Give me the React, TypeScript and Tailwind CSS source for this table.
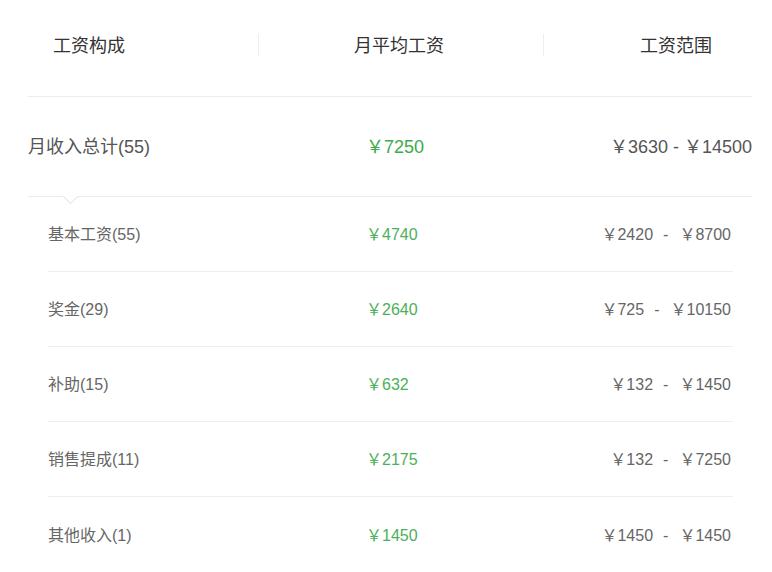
import React from 'react';

type SubRow = { name: string; avg: string; min: string; max: string };

const subRows: SubRow[] = [
    { name: '基本工资(55)', avg: '4740', min: '2420', max: '8700' },
    { name: '奖金(29)', avg: '2640', min: '725', max: '10150' },
    { name: '补助(15)', avg: '632', min: '132', max: '1450' },
    { name: '销售提成(11)', avg: '2175', min: '132', max: '7250' },
    { name: '其他收入(1)', avg: '1450', min: '1450', max: '1450' },
];

const font = { fontFamily: '"Liberation Sans", Arial, "Noto Sans CJK SC", sans-serif' };

const App: React.FC = () => {
    return (
        <div className="w-[772px] h-[572px] bg-white overflow-hidden" style={font}>
            <div className="ml-[28px] mr-[20px]">
                {/* header */}
                <div className="flex items-center h-[97px] border-b border-[#ececec] text-[18px] text-[#333]">
                    <div className="w-[230px] pl-[25px] pb-[3px]">工资构成</div>
                    <div className="w-px h-[22px] bg-[#eeeeee] -mt-[6px]" />
                    <div className="w-[284px] text-center pb-[3px] pr-[4px]">月平均工资</div>
                    <div className="w-px h-[22px] bg-[#eeeeee] -mt-[6px]" />
                    <div className="flex-1 pl-[96px] pb-[3px]">工资范围</div>
                </div>

                {/* total row */}
                <div className="relative flex items-center h-[100px] pt-[2px] border-b border-[#ececec] text-[18px]">
                    <div className="w-[338px] text-[#555]">月收入总计(55)</div>
                    <div className="flex-1 text-[#3cab4b]">￥7250</div>
                    <div className="text-[#555]">￥3630 - ￥14500</div>
                    <div className="absolute left-[37px] -bottom-[6px] w-[11px] h-[11px] bg-white rotate-45 border-r border-b border-[#e6e6e6]" />
                </div>

                {/* sub rows */}
                <div className="ml-[20px] mr-[19px]">
                    {subRows.map((r, i) => (
                        <div
                            key={r.name}
                            className={`flex items-center h-[75px] pt-[2px] text-[16px] ${i < subRows.length - 1 ? 'border-b border-[#eeeeee]' : ''}`}
                        >
                            <div className="w-[318px] text-[#666]">{r.name}</div>
                            <div className="flex-1 text-[#4cb05a]">￥{r.avg}</div>
                            <div className="flex text-[#666] pr-[2px]">
                                <span>￥{r.min}</span>
                                <span className="ml-[10px] mr-[11px]">-</span>
                                <span>￥{r.max}</span>
                            </div>
                        </div>
                    ))}
                </div>
            </div>
        </div>
    );
};

export default App;
